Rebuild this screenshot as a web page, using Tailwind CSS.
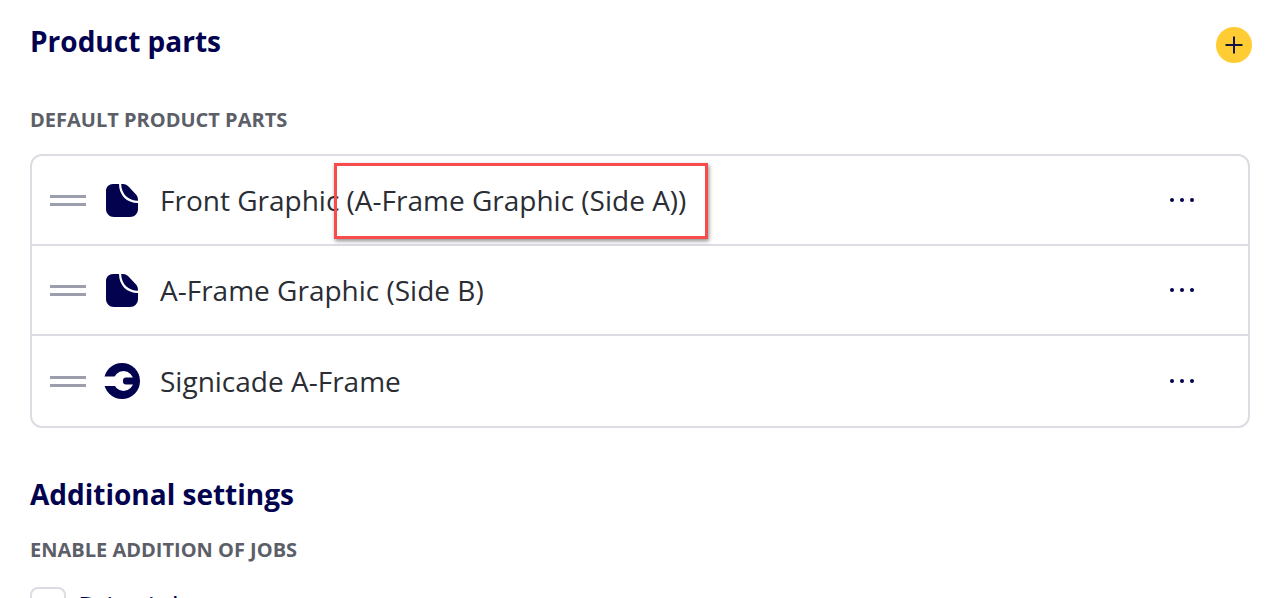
<!DOCTYPE html>
<html><head><meta charset="utf-8"><script src="https://cdn.jsdelivr.net/npm/@tailwindcss/browser@4"></script></head>
<body class="bg-white overflow-hidden">
<div class="relative w-[1288px] h-[598px] overflow-hidden font-['Open_Sans',sans-serif] pl-[30px] pr-[38px]">
  <div class="flex justify-between h-[94px]">
    <h1 class="mt-[22px] text-[28px] leading-[38px] font-bold text-[#02024f]">Product parts</h1>
    <button class="mt-[27px] mr-[-2px] w-9 h-9 rounded-full bg-[#ffcc33] flex items-center justify-center">
      <svg class="w-[18px] h-[18px]" viewBox="0 0 18 18"><path d="M9 0.5v17M0.5 9h17" stroke="#14143f" stroke-width="2" fill="none"/></svg>
    </button>
  </div>
  <h2 class="mt-[13px] text-[20px] leading-[26px] font-bold text-[#5c5e68]">DEFAULT PRODUCT PARTS</h2>
  <div class="mt-[21px] border-2 border-[#dcdce2] rounded-xl flex flex-col">
    <div class="h-[90px] flex items-center border-b-2 border-[#dcdce2]">
      <div class="ml-[18px] w-9 flex flex-col gap-[5px]"><div class="h-[3px] bg-[#9c9dad]"></div><div class="h-[3px] bg-[#9c9dad]"></div></div>
      <svg class="ml-5 w-8 h-[33px]" viewBox="0 0 32 33"><path d="M7 0H13C13 11 20.500 19 32 19V25C32 29.500 28.500 33 24 33H8C3.500 33 0 29.500 0 25V7C0 3 3 0 7 0Z" fill="#02024f"/><path d="M15.200 0H17C19 0 20.500 .7 22 2L30 10.500C31.500 12 32 14 32 16.800C22.500 16.800 15.200 10 15.200 0Z" fill="#02024f"/></svg>
      <span class="ml-[22px] text-[28px] text-[#2a2d34]">Front Graphic (A-Frame Graphic (Side A))</span>
      <div class="ml-auto mr-[54px] flex gap-[6px]"><i class="block w-1 h-1 rounded-full bg-[#02024f]"></i><i class="block w-1 h-1 rounded-full bg-[#02024f]"></i><i class="block w-1 h-1 rounded-full bg-[#02024f]"></i></div>
    </div>
    <div class="h-[90px] flex items-center border-b-2 border-[#dcdce2]">
      <div class="ml-[18px] w-9 flex flex-col gap-[5px]"><div class="h-[3px] bg-[#9c9dad]"></div><div class="h-[3px] bg-[#9c9dad]"></div></div>
      <svg class="ml-5 w-8 h-[33px]" viewBox="0 0 32 33"><path d="M7 0H13C13 11 20.500 19 32 19V25C32 29.500 28.500 33 24 33H8C3.500 33 0 29.500 0 25V7C0 3 3 0 7 0Z" fill="#02024f"/><path d="M15.200 0H17C19 0 20.500 .7 22 2L30 10.500C31.500 12 32 14 32 16.800C22.500 16.800 15.200 10 15.200 0Z" fill="#02024f"/></svg>
      <span class="ml-[22px] text-[28px] text-[#2a2d34]">A-Frame Graphic (Side B)</span>
      <div class="ml-auto mr-[54px] flex gap-[6px]"><i class="block w-1 h-1 rounded-full bg-[#02024f]"></i><i class="block w-1 h-1 rounded-full bg-[#02024f]"></i><i class="block w-1 h-1 rounded-full bg-[#02024f]"></i></div>
    </div>
    <div class="h-[90px] flex items-center">
      <div class="ml-[18px] w-9 flex flex-col gap-[5px]"><div class="h-[3px] bg-[#9c9dad]"></div><div class="h-[3px] bg-[#9c9dad]"></div></div>
      <svg class="ml-[18px] w-9 h-9" viewBox="0 0 36 36"><circle cx="18" cy="18" r="18" fill="#02024f"/><circle cx="19.500" cy="18" r="10" fill="#fff"/><rect x="-1" y="13.500" width="16" height="9.500" fill="#fff"/><rect x="19" y="14.500" width="14" height="7" rx="3" fill="#02024f"/></svg>
      <span class="ml-5 text-[28px] text-[#2a2d34]">Signicade A-Frame</span>
      <div class="ml-auto mr-[54px] flex gap-[6px]"><i class="block w-1 h-1 rounded-full bg-[#02024f]"></i><i class="block w-1 h-1 rounded-full bg-[#02024f]"></i><i class="block w-1 h-1 rounded-full bg-[#02024f]"></i></div>
    </div>
  </div>
  <h2 class="mt-[47px] text-[28px] leading-[38px] font-bold text-[#02024f]">Additional settings</h2>
  <h2 class="mt-[24px] text-[20px] leading-[26px] font-bold text-[#5c5e68]">ENABLE ADDITION OF JOBS</h2>
  <label class="mt-[24px] flex items-start gap-3">
    <span class="block w-9 h-9 border-2 border-[#dcdce2] rounded-lg"></span>
    <span class="mt-[1px] text-[28px] leading-[36px] text-[#02024f]">Print job</span>
  </label>
  <div class="absolute left-[334px] top-[163px] w-[374px] h-[76px] border-[3px] border-[#f84c4c] shadow-[1px_2px_4px_rgba(0,0,0,0.45)]"></div>
</div>
</body></html>
